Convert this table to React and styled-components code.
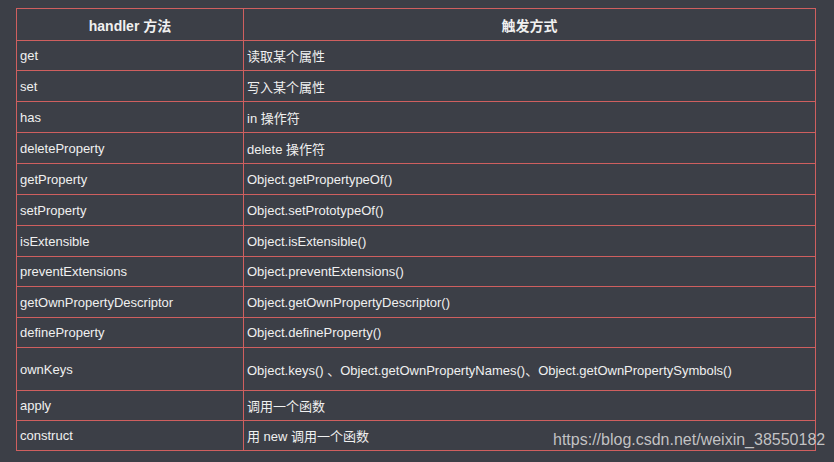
import React from "react";
import styled, { createGlobalStyle } from "styled-components";

const GlobalStyle = createGlobalStyle`
  html, body {
    margin: 0;
    padding: 0;
    background: #3c3f47;
  }
  body {
    font-family: "Liberation Sans", Arial, "Noto Sans CJK SC", sans-serif;
  }
`;

const Page = styled.div`
  position: relative;
  width: 834px;
  height: 462px;
  padding: 8px 0 0 16px;
  box-sizing: border-box;
  background: #3c3f47;
`;

const Table = styled.table`
  border-collapse: collapse;
  width: 800px;
  table-layout: fixed;
  color: #f0f0f0;
  font-size: 13px;
`;

const HeadCell = styled.th`
  height: 31px;
  padding: 0;
  border: 1px solid #cf5f5f;
  font-size: 14px;
  font-weight: bold;
  text-align: center;
  vertical-align: middle;
  width: ${(p) => p.$w || "auto"};
`;

const Row = styled.tr`
  height: ${(p) => p.$h}px;
`;

const Cell = styled.td`
  padding: 0 0 0 3px;
  border: 1px solid #cf5f5f;
  vertical-align: middle;
  white-space: nowrap;
`;

const Watermark = styled.div`
  position: absolute;
  left: 553px;
  top: 431px;
  font-size: 16px;
  color: rgba(220, 220, 220, 0.85);
  white-space: nowrap;
`;

const rows = [
  ["get", "读取某个属性", 30],
  ["set", "写入某个属性", 31],
  ["has", "in 操作符", 31],
  ["deleteProperty", "delete 操作符", 31],
  ["getProperty", "Object.getPropertypeOf()", 31],
  ["setProperty", "Object.setPrototypeOf()", 31],
  ["isExtensible", "Object.isExtensible()", 31],
  ["preventExtensions", "Object.preventExtensions()", 30],
  ["getOwnPropertyDescriptor", "Object.getOwnPropertyDescriptor()", 31],
  ["defineProperty", "Object.defineProperty()", 30],
  ["ownKeys", "Object.keys() 、Object.getOwnPropertyNames()、Object.getOwnPropertySymbols()", 43],
  ["apply", "调用一个函数", 30],
  ["construct", "用 new 调用一个函数", 30],
];

export default function App() {
  return (
    <Page>
      <GlobalStyle />
      <Table>
        <thead>
          <tr>
            <HeadCell $w="226px">handler 方法</HeadCell>
            <HeadCell>触发方式</HeadCell>
          </tr>
        </thead>
        <tbody>
          {rows.map(([name, how, h]) => (
            <Row key={name} $h={h}>
              <Cell>{name}</Cell>
              <Cell>{how}</Cell>
            </Row>
          ))}
        </tbody>
      </Table>
      <Watermark>https://blog.csdn.net/weixin_38550182</Watermark>
    </Page>
  );
}
